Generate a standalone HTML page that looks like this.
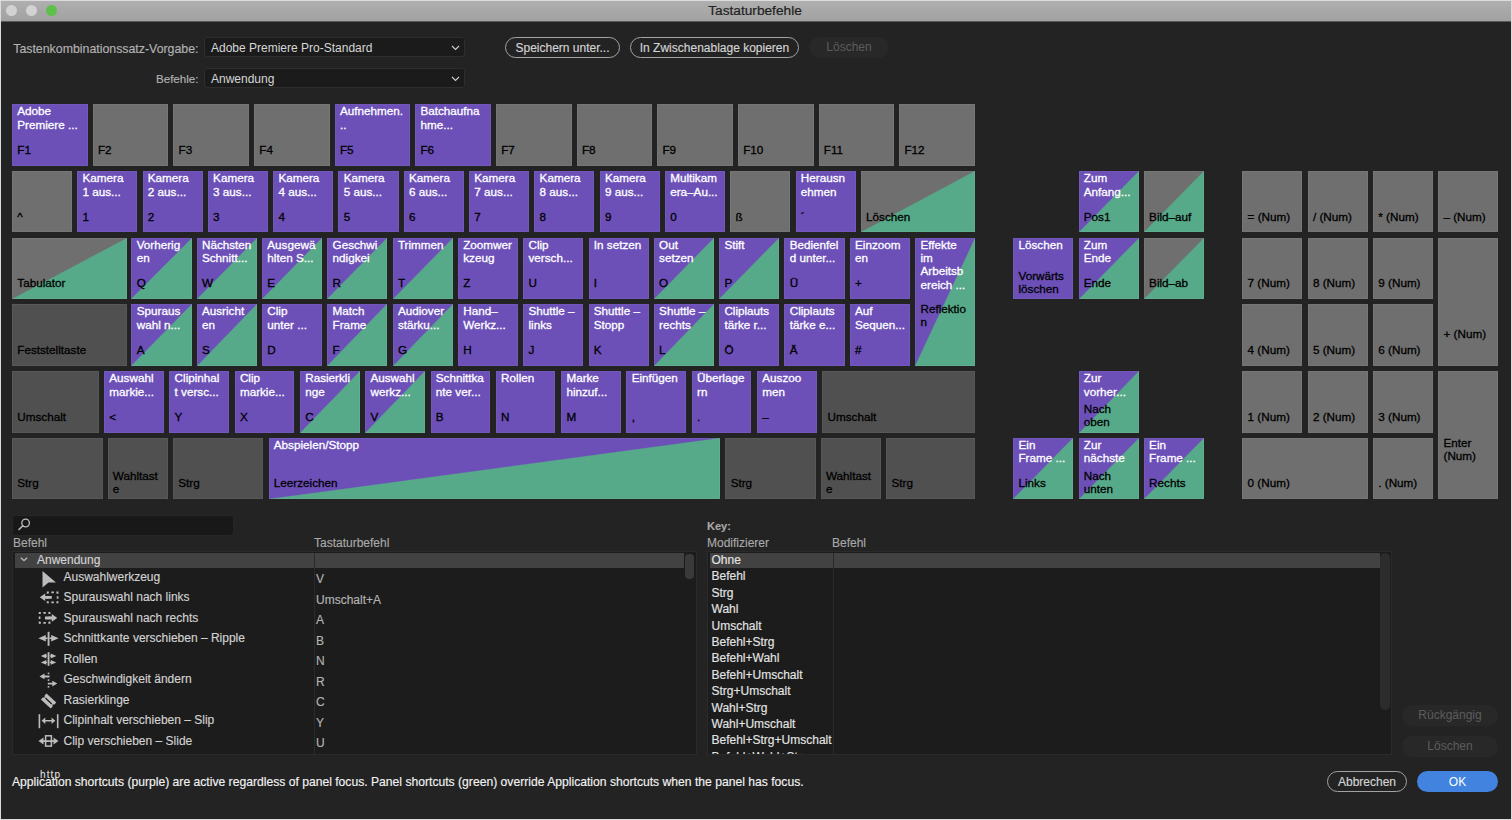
<!DOCTYPE html>
<html><head><meta charset="utf-8">
<style>
html,body{margin:0;padding:0;}
body{width:1512px;height:820px;overflow:hidden;background:#dcdcdc;position:relative;font-family:"Liberation Sans",sans-serif;}
.win{position:absolute;left:1px;top:1px;width:1510px;height:818px;background:#232323;overflow:hidden;}
.tb{position:absolute;left:0;top:0;width:1510px;height:20px;background:linear-gradient(#afafaf,#a1a1a1);border-bottom:1px solid #5a5a5a;}
.tl{position:absolute;top:3.6px;width:11.4px;height:11.4px;border-radius:50%;background:#d2d2d2;}
.title{position:absolute;left:-1px;width:1510px;top:2.4px;-webkit-text-stroke:0.2px #1c1c1c;text-align:center;font-size:13.7px;color:#232323;line-height:16px;}
.abs{position:absolute;}
.k{position:absolute;overflow:hidden;box-shadow:inset 0 0 0 1px rgba(255,255,255,0.05);}
.k .c{position:absolute;left:5.3px;top:0.4px;-webkit-text-stroke:0.3px #fff;font-size:11.7px;line-height:13.2px;color:#fff;white-space:nowrap;}
.k .l{position:absolute;left:5.3px;-webkit-text-stroke:0.3px #000;font-size:11.7px;line-height:13.3px;color:#000;white-space:nowrap;}
.lbl{position:absolute;font-size:12px;color:#b2b2b2;white-space:nowrap;line-height:14px;-webkit-text-stroke:0.15px currentColor;}
.dd{position:absolute;left:204px;width:261px;height:20px;background:#1b1b1b;border:1px solid #2e2e2e;border-radius:3px;box-sizing:border-box;}
.dd span{position:absolute;left:6px;top:2px;font-size:12px;color:#d6d6d6;line-height:14px;}
.dd svg{position:absolute;right:4px;top:7px;}
.btn{position:absolute;height:21px;box-sizing:border-box;border:1.7px solid #a4a4a4;border-radius:11px;color:#d4d4d4;font-size:12px;text-align:center;line-height:19.5px;padding-top:0.7px;-webkit-text-stroke:0.15px currentColor;}
.btnd{position:absolute;height:21px;box-sizing:border-box;border-radius:11px;background:#282828;color:#5c5c5c;font-size:12px;text-align:center;line-height:21px;}
.list{position:absolute;background:#1c1c1c;border:1px solid #2a2a2a;box-sizing:border-box;overflow:hidden;}
.row{position:absolute;font-size:12px;color:#d2d2d2;white-space:nowrap;line-height:14px;-webkit-text-stroke:0.15px currentColor;}
</style></head><body>
<div class="win">
 <div class="tb"></div>
 <div class="tl" style="left:4.6px;"></div>
 <div class="tl" style="left:24.6px;"></div>
 <div class="tl" style="left:44.6px;background:#5cc14a;"></div>
 <div class="title">Tastaturbefehle</div>
</div>
<div class="abs" style="left:0;top:0;width:1512px;height:820px;">
 <div class="lbl" style="right:1313.5px;top:41.5px;font-size:12.35px;">Tastenkombinationssatz-Vorgabe:</div>
 <div class="dd" style="top:37px;"><span style="top:2.5px">Adobe Premiere Pro-Standard</span><svg width="9" height="6" viewBox="0 0 9 6"><path d="M1 1 L4.5 4.5 L8 1" fill="none" stroke="#cfcfcf" stroke-width="1.1"/></svg></div>
 <div class="lbl" style="right:1313.5px;top:72px;font-size:11.6px;">Befehle:</div>
 <div class="dd" style="top:68px;"><span style="top:2.5px">Anwendung</span><svg width="9" height="6" viewBox="0 0 9 6"><path d="M1 1 L4.5 4.5 L8 1" fill="none" stroke="#cfcfcf" stroke-width="1.1"/></svg></div>
 <div class="btn" style="left:505px;top:37px;width:115px;">Speichern unter...</div>
 <div class="btn" style="left:630px;top:37px;width:169px;">In Zwischenablage kopieren</div>
 <div class="btnd" style="left:809px;top:37px;width:80px;">Löschen</div>

<div class="k" style="left:12.0px;top:104.0px;width:75.8px;height:61.8px;background:#6c50b8"><div class="c">Adobe<br>Premiere ...</div><div class="l" style="top:38.5px">F1</div></div>
<div class="k" style="left:92.7px;top:104.0px;width:75.8px;height:61.8px;background:#6f6f6f"><div class="l" style="top:38.5px">F2</div></div>
<div class="k" style="left:173.3px;top:104.0px;width:75.8px;height:61.8px;background:#6f6f6f"><div class="l" style="top:38.5px">F3</div></div>
<div class="k" style="left:254.0px;top:104.0px;width:75.8px;height:61.8px;background:#6f6f6f"><div class="l" style="top:38.5px">F4</div></div>
<div class="k" style="left:334.6px;top:104.0px;width:75.8px;height:61.8px;background:#6c50b8"><div class="c">Aufnehmen.<br>..</div><div class="l" style="top:38.5px">F5</div></div>
<div class="k" style="left:415.2px;top:104.0px;width:75.8px;height:61.8px;background:#6c50b8"><div class="c">Batchaufna<br>hme...</div><div class="l" style="top:38.5px">F6</div></div>
<div class="k" style="left:495.9px;top:104.0px;width:75.8px;height:61.8px;background:#6f6f6f"><div class="l" style="top:38.5px">F7</div></div>
<div class="k" style="left:576.6px;top:104.0px;width:75.8px;height:61.8px;background:#6f6f6f"><div class="l" style="top:38.5px">F8</div></div>
<div class="k" style="left:657.2px;top:104.0px;width:75.8px;height:61.8px;background:#6f6f6f"><div class="l" style="top:38.5px">F9</div></div>
<div class="k" style="left:737.9px;top:104.0px;width:75.8px;height:61.8px;background:#6f6f6f"><div class="l" style="top:38.5px">F10</div></div>
<div class="k" style="left:818.5px;top:104.0px;width:75.8px;height:61.8px;background:#6f6f6f"><div class="l" style="top:38.5px">F11</div></div>
<div class="k" style="left:899.2px;top:104.0px;width:75.8px;height:61.8px;background:#6f6f6f"><div class="l" style="top:38.5px">F12</div></div>
<div class="k" style="left:12.0px;top:171.0px;width:60.3px;height:61.3px;background:#6f6f6f"><div class="l" style="top:38.5px">^</div></div>
<div class="k" style="left:77.2px;top:171.0px;width:60.2px;height:61.3px;background:#6c50b8"><div class="c">Kamera<br>1 aus...</div><div class="l" style="top:38.5px">1</div></div>
<div class="k" style="left:142.5px;top:171.0px;width:60.2px;height:61.3px;background:#6c50b8"><div class="c">Kamera<br>2 aus...</div><div class="l" style="top:38.5px">2</div></div>
<div class="k" style="left:207.8px;top:171.0px;width:60.2px;height:61.3px;background:#6c50b8"><div class="c">Kamera<br>3 aus...</div><div class="l" style="top:38.5px">3</div></div>
<div class="k" style="left:273.1px;top:171.0px;width:60.2px;height:61.3px;background:#6c50b8"><div class="c">Kamera<br>4 aus...</div><div class="l" style="top:38.5px">4</div></div>
<div class="k" style="left:338.4px;top:171.0px;width:60.2px;height:61.3px;background:#6c50b8"><div class="c">Kamera<br>5 aus...</div><div class="l" style="top:38.5px">5</div></div>
<div class="k" style="left:403.7px;top:171.0px;width:60.2px;height:61.3px;background:#6c50b8"><div class="c">Kamera<br>6 aus...</div><div class="l" style="top:38.5px">6</div></div>
<div class="k" style="left:469.0px;top:171.0px;width:60.2px;height:61.3px;background:#6c50b8"><div class="c">Kamera<br>7 aus...</div><div class="l" style="top:38.5px">7</div></div>
<div class="k" style="left:534.3px;top:171.0px;width:60.2px;height:61.3px;background:#6c50b8"><div class="c">Kamera<br>8 aus...</div><div class="l" style="top:38.5px">8</div></div>
<div class="k" style="left:599.6px;top:171.0px;width:60.2px;height:61.3px;background:#6c50b8"><div class="c">Kamera<br>9 aus...</div><div class="l" style="top:38.5px">9</div></div>
<div class="k" style="left:664.9px;top:171.0px;width:60.2px;height:61.3px;background:#6c50b8"><div class="c">Multikam<br>era–Au...</div><div class="l" style="top:38.5px">0</div></div>
<div class="k" style="left:730.2px;top:171.0px;width:60.2px;height:61.3px;background:#6f6f6f"><div class="l" style="top:38.5px">ß</div></div>
<div class="k" style="left:795.5px;top:171.0px;width:60.2px;height:61.3px;background:#6c50b8"><div class="c">Herausn<br>ehmen</div><div class="l" style="top:38.5px">´</div></div>
<div class="k" style="left:860.8px;top:171.0px;width:114.4px;height:61.3px;background:linear-gradient(to bottom right,#6f6f6f calc(50% - 0.6px),#56aa89 calc(50% + 0.6px))"><div class="l" style="top:38.5px">Löschen</div></div>
<div class="k" style="left:12.0px;top:237.5px;width:115.0px;height:61.3px;background:linear-gradient(to bottom right,#6f6f6f calc(50% - 0.6px),#56aa89 calc(50% + 0.6px))"><div class="l" style="top:38.5px">Tabulator</div></div>
<div class="k" style="left:131.4px;top:237.5px;width:60.2px;height:61.3px;background:linear-gradient(to bottom right,#6c50b8 calc(50% - 0.6px),#56aa89 calc(50% + 0.6px))"><div class="c">Vorherig<br>en</div><div class="l" style="top:38.5px">Q</div></div>
<div class="k" style="left:196.7px;top:237.5px;width:60.2px;height:61.3px;background:linear-gradient(to bottom right,#6c50b8 calc(50% - 0.6px),#56aa89 calc(50% + 0.6px))"><div class="c">Nächsten<br>Schnitt...</div><div class="l" style="top:38.5px">W</div></div>
<div class="k" style="left:262.0px;top:237.5px;width:60.2px;height:61.3px;background:linear-gradient(to bottom right,#6c50b8 calc(50% - 0.6px),#56aa89 calc(50% + 0.6px))"><div class="c">Ausgewä<br>hlten S...</div><div class="l" style="top:38.5px">E</div></div>
<div class="k" style="left:327.3px;top:237.5px;width:60.2px;height:61.3px;background:linear-gradient(to bottom right,#6c50b8 calc(50% - 0.6px),#56aa89 calc(50% + 0.6px))"><div class="c">Geschwi<br>ndigkei</div><div class="l" style="top:38.5px">R</div></div>
<div class="k" style="left:392.6px;top:237.5px;width:60.2px;height:61.3px;background:linear-gradient(to bottom right,#6c50b8 calc(50% - 0.6px),#56aa89 calc(50% + 0.6px))"><div class="c">Trimmen</div><div class="l" style="top:38.5px">T</div></div>
<div class="k" style="left:457.9px;top:237.5px;width:60.2px;height:61.3px;background:#6c50b8"><div class="c">Zoomwer<br>kzeug</div><div class="l" style="top:38.5px">Z</div></div>
<div class="k" style="left:523.2px;top:237.5px;width:60.2px;height:61.3px;background:#6c50b8"><div class="c">Clip<br>versch...</div><div class="l" style="top:38.5px">U</div></div>
<div class="k" style="left:588.5px;top:237.5px;width:60.2px;height:61.3px;background:#6c50b8"><div class="c">In setzen</div><div class="l" style="top:38.5px">I</div></div>
<div class="k" style="left:653.8px;top:237.5px;width:60.2px;height:61.3px;background:linear-gradient(to bottom right,#6c50b8 calc(50% - 0.6px),#56aa89 calc(50% + 0.6px))"><div class="c">Out<br>setzen</div><div class="l" style="top:38.5px">O</div></div>
<div class="k" style="left:719.1px;top:237.5px;width:60.2px;height:61.3px;background:linear-gradient(to bottom right,#6c50b8 calc(50% - 0.6px),#56aa89 calc(50% + 0.6px))"><div class="c">Stift</div><div class="l" style="top:38.5px">P</div></div>
<div class="k" style="left:784.4px;top:237.5px;width:60.2px;height:61.3px;background:#6c50b8"><div class="c">Bedienfel<br>d unter...</div><div class="l" style="top:38.5px">Ü</div></div>
<div class="k" style="left:849.7px;top:237.5px;width:60.2px;height:61.3px;background:#6c50b8"><div class="c">Einzoom<br>en</div><div class="l" style="top:38.5px">+</div></div>
<div class="k" style="left:915.2px;top:237.5px;width:60.0px;height:128.3px;background:linear-gradient(to bottom right,#6c50b8 calc(50% - 0.6px),#56aa89 calc(50% + 0.6px))"><div class="c">Effekte<br>im<br>Arbeitsb<br>ereich ...</div><div class="l" style="top:64.7px">Reflektio<br>n</div></div>
<div class="k" style="left:12.0px;top:304.0px;width:115.0px;height:61.8px;background:#505050"><div class="l" style="top:38.5px">Feststelltaste</div></div>
<div class="k" style="left:131.4px;top:304.0px;width:60.2px;height:61.8px;background:linear-gradient(to bottom right,#6c50b8 calc(50% - 0.6px),#56aa89 calc(50% + 0.6px))"><div class="c">Spuraus<br>wahl n...</div><div class="l" style="top:38.5px">A</div></div>
<div class="k" style="left:196.7px;top:304.0px;width:60.2px;height:61.8px;background:linear-gradient(to bottom right,#6c50b8 calc(50% - 0.6px),#56aa89 calc(50% + 0.6px))"><div class="c">Ausricht<br>en</div><div class="l" style="top:38.5px">S</div></div>
<div class="k" style="left:262.0px;top:304.0px;width:60.2px;height:61.8px;background:#6c50b8"><div class="c">Clip<br>unter ...</div><div class="l" style="top:38.5px">D</div></div>
<div class="k" style="left:327.3px;top:304.0px;width:60.2px;height:61.8px;background:linear-gradient(to bottom right,#6c50b8 calc(50% - 0.6px),#56aa89 calc(50% + 0.6px))"><div class="c">Match<br>Frame</div><div class="l" style="top:38.5px">F</div></div>
<div class="k" style="left:392.6px;top:304.0px;width:60.2px;height:61.8px;background:linear-gradient(to bottom right,#6c50b8 calc(50% - 0.6px),#56aa89 calc(50% + 0.6px))"><div class="c">Audiover<br>stärku...</div><div class="l" style="top:38.5px">G</div></div>
<div class="k" style="left:457.9px;top:304.0px;width:60.2px;height:61.8px;background:#6c50b8"><div class="c">Hand–<br>Werkz...</div><div class="l" style="top:38.5px">H</div></div>
<div class="k" style="left:523.2px;top:304.0px;width:60.2px;height:61.8px;background:#6c50b8"><div class="c">Shuttle –<br>links</div><div class="l" style="top:38.5px">J</div></div>
<div class="k" style="left:588.5px;top:304.0px;width:60.2px;height:61.8px;background:#6c50b8"><div class="c">Shuttle –<br>Stopp</div><div class="l" style="top:38.5px">K</div></div>
<div class="k" style="left:653.8px;top:304.0px;width:60.2px;height:61.8px;background:linear-gradient(to bottom right,#6c50b8 calc(50% - 0.6px),#56aa89 calc(50% + 0.6px))"><div class="c">Shuttle –<br>rechts</div><div class="l" style="top:38.5px">L</div></div>
<div class="k" style="left:719.1px;top:304.0px;width:60.2px;height:61.8px;background:#6c50b8"><div class="c">Cliplauts<br>tärke r...</div><div class="l" style="top:38.5px">Ö</div></div>
<div class="k" style="left:784.4px;top:304.0px;width:60.2px;height:61.8px;background:#6c50b8"><div class="c">Cliplauts<br>tärke e...</div><div class="l" style="top:38.5px">Ä</div></div>
<div class="k" style="left:849.7px;top:304.0px;width:60.2px;height:61.8px;background:#6c50b8"><div class="c">Auf<br>Sequen...</div><div class="l" style="top:38.5px">#</div></div>
<div class="k" style="left:12.0px;top:371.0px;width:86.5px;height:61.9px;background:#505050"><div class="l" style="top:38.5px">Umschalt</div></div>
<div class="k" style="left:104.0px;top:371.0px;width:59.7px;height:61.9px;background:#6c50b8"><div class="c">Auswahl<br>markie...</div><div class="l" style="top:38.5px">&lt;</div></div>
<div class="k" style="left:169.3px;top:371.0px;width:59.7px;height:61.9px;background:#6c50b8"><div class="c">Clipinhal<br>t versc...</div><div class="l" style="top:38.5px">Y</div></div>
<div class="k" style="left:234.6px;top:371.0px;width:59.7px;height:61.9px;background:#6c50b8"><div class="c">Clip<br>markie...</div><div class="l" style="top:38.5px">X</div></div>
<div class="k" style="left:299.9px;top:371.0px;width:59.7px;height:61.9px;background:linear-gradient(to bottom right,#6c50b8 calc(50% - 0.6px),#56aa89 calc(50% + 0.6px))"><div class="c">Rasierkli<br>nge</div><div class="l" style="top:38.5px">C</div></div>
<div class="k" style="left:365.2px;top:371.0px;width:59.7px;height:61.9px;background:linear-gradient(to bottom right,#6c50b8 calc(50% - 0.6px),#56aa89 calc(50% + 0.6px))"><div class="c">Auswahl<br>werkz...</div><div class="l" style="top:38.5px">V</div></div>
<div class="k" style="left:430.5px;top:371.0px;width:59.7px;height:61.9px;background:#6c50b8"><div class="c">Schnittka<br>nte ver...</div><div class="l" style="top:38.5px">B</div></div>
<div class="k" style="left:495.8px;top:371.0px;width:59.7px;height:61.9px;background:#6c50b8"><div class="c">Rollen</div><div class="l" style="top:38.5px">N</div></div>
<div class="k" style="left:561.1px;top:371.0px;width:59.7px;height:61.9px;background:#6c50b8"><div class="c">Marke<br>hinzuf...</div><div class="l" style="top:38.5px">M</div></div>
<div class="k" style="left:626.4px;top:371.0px;width:59.7px;height:61.9px;background:#6c50b8"><div class="c">Einfügen</div><div class="l" style="top:38.5px">,</div></div>
<div class="k" style="left:691.7px;top:371.0px;width:59.7px;height:61.9px;background:#6c50b8"><div class="c">Überlage<br>rn</div><div class="l" style="top:38.5px">.</div></div>
<div class="k" style="left:757.0px;top:371.0px;width:59.7px;height:61.9px;background:#6c50b8"><div class="c">Auszoo<br>men</div><div class="l" style="top:38.5px">–</div></div>
<div class="k" style="left:822.3px;top:371.0px;width:152.9px;height:61.9px;background:#505050"><div class="l" style="top:38.5px">Umschalt</div></div>
<div class="k" style="left:12.0px;top:437.7px;width:90.5px;height:61.3px;background:#505050"><div class="l" style="top:38.5px">Strg</div></div>
<div class="k" style="left:107.5px;top:437.7px;width:60.2px;height:61.3px;background:#505050"><div class="l" style="top:31.0px">Wahltast<br>e</div></div>
<div class="k" style="left:173.0px;top:437.7px;width:90.0px;height:61.3px;background:#505050"><div class="l" style="top:38.5px">Strg</div></div>
<div class="k" style="left:268.5px;top:437.7px;width:451.3px;height:61.3px;background:linear-gradient(to bottom right,#6c50b8 calc(50% - 0.6px),#56aa89 calc(50% + 0.6px))"><div class="c">Abspielen/Stopp</div><div class="l" style="top:38.5px">Leerzeichen</div></div>
<div class="k" style="left:725.4px;top:437.7px;width:90.3px;height:61.3px;background:#505050"><div class="l" style="top:38.5px">Strg</div></div>
<div class="k" style="left:820.7px;top:437.7px;width:60.2px;height:61.3px;background:#505050"><div class="l" style="top:31.0px">Wahltast<br>e</div></div>
<div class="k" style="left:886.2px;top:437.7px;width:89.3px;height:61.3px;background:#505050"><div class="l" style="top:38.5px">Strg</div></div>
<div class="k" style="left:1078.5px;top:171.0px;width:60.2px;height:61.3px;background:linear-gradient(to bottom right,#6c50b8 calc(50% - 0.6px),#56aa89 calc(50% + 0.6px))"><div class="c">Zum<br>Anfang...</div><div class="l" style="top:38.5px">Pos1</div></div>
<div class="k" style="left:1143.8px;top:171.0px;width:60.2px;height:61.3px;background:linear-gradient(to bottom right,#6f6f6f calc(50% - 0.6px),#56aa89 calc(50% + 0.6px))"><div class="l" style="top:38.5px">Bild–auf</div></div>
<div class="k" style="left:1013.2px;top:237.5px;width:60.2px;height:61.3px;background:#6c50b8"><div class="c">Löschen</div><div class="l" style="top:31.0px">Vorwärts<br>löschen</div></div>
<div class="k" style="left:1078.5px;top:237.5px;width:60.2px;height:61.3px;background:linear-gradient(to bottom right,#6c50b8 calc(50% - 0.6px),#56aa89 calc(50% + 0.6px))"><div class="c">Zum<br>Ende</div><div class="l" style="top:38.5px">Ende</div></div>
<div class="k" style="left:1143.8px;top:237.5px;width:60.2px;height:61.3px;background:linear-gradient(to bottom right,#6f6f6f calc(50% - 0.6px),#56aa89 calc(50% + 0.6px))"><div class="l" style="top:38.5px">Bild–ab</div></div>
<div class="k" style="left:1078.5px;top:371.0px;width:60.2px;height:61.9px;background:linear-gradient(to bottom right,#6c50b8 calc(50% - 0.6px),#56aa89 calc(50% + 0.6px))"><div class="c">Zur<br>vorher...</div><div class="l" style="top:31.0px">Nach<br>oben</div></div>
<div class="k" style="left:1013.2px;top:437.7px;width:60.2px;height:61.3px;background:linear-gradient(to bottom right,#6c50b8 calc(50% - 0.6px),#56aa89 calc(50% + 0.6px))"><div class="c">Ein<br>Frame ...</div><div class="l" style="top:38.5px">Links</div></div>
<div class="k" style="left:1078.5px;top:437.7px;width:60.2px;height:61.3px;background:linear-gradient(to bottom right,#6c50b8 calc(50% - 0.6px),#56aa89 calc(50% + 0.6px))"><div class="c">Zur<br>nächste</div><div class="l" style="top:31.0px">Nach<br>unten</div></div>
<div class="k" style="left:1143.8px;top:437.7px;width:60.2px;height:61.3px;background:linear-gradient(to bottom right,#6c50b8 calc(50% - 0.6px),#56aa89 calc(50% + 0.6px))"><div class="c">Ein<br>Frame ...</div><div class="l" style="top:38.5px">Rechts</div></div>
<div class="k" style="left:1242.3px;top:171.0px;width:60.2px;height:61.3px;background:#6f6f6f"><div class="l" style="top:38.5px">= (Num)</div></div>
<div class="k" style="left:1307.6px;top:171.0px;width:60.2px;height:61.3px;background:#6f6f6f"><div class="l" style="top:38.5px">/ (Num)</div></div>
<div class="k" style="left:1373.0px;top:171.0px;width:60.2px;height:61.3px;background:#6f6f6f"><div class="l" style="top:38.5px">* (Num)</div></div>
<div class="k" style="left:1438.2px;top:171.0px;width:60.2px;height:61.3px;background:#6f6f6f"><div class="l" style="top:38.5px">– (Num)</div></div>
<div class="k" style="left:1242.3px;top:237.5px;width:60.2px;height:61.3px;background:#6f6f6f"><div class="l" style="top:38.5px">7 (Num)</div></div>
<div class="k" style="left:1307.6px;top:237.5px;width:60.2px;height:61.3px;background:#6f6f6f"><div class="l" style="top:38.5px">8 (Num)</div></div>
<div class="k" style="left:1373.0px;top:237.5px;width:60.2px;height:61.3px;background:#6f6f6f"><div class="l" style="top:38.5px">9 (Num)</div></div>
<div class="k" style="left:1438.2px;top:237.5px;width:60.2px;height:128.3px;background:#6f6f6f"><div class="l" style="top:89.0px">+ (Num)</div></div>
<div class="k" style="left:1242.3px;top:304.0px;width:60.2px;height:61.8px;background:#6f6f6f"><div class="l" style="top:38.5px">4 (Num)</div></div>
<div class="k" style="left:1307.6px;top:304.0px;width:60.2px;height:61.8px;background:#6f6f6f"><div class="l" style="top:38.5px">5 (Num)</div></div>
<div class="k" style="left:1373.0px;top:304.0px;width:60.2px;height:61.8px;background:#6f6f6f"><div class="l" style="top:38.5px">6 (Num)</div></div>
<div class="k" style="left:1242.3px;top:371.0px;width:60.2px;height:61.9px;background:#6f6f6f"><div class="l" style="top:38.5px">1 (Num)</div></div>
<div class="k" style="left:1307.6px;top:371.0px;width:60.2px;height:61.9px;background:#6f6f6f"><div class="l" style="top:38.5px">2 (Num)</div></div>
<div class="k" style="left:1373.0px;top:371.0px;width:60.2px;height:61.9px;background:#6f6f6f"><div class="l" style="top:38.5px">3 (Num)</div></div>
<div class="k" style="left:1438.2px;top:371.0px;width:60.2px;height:128.0px;background:#6f6f6f"><div class="l" style="top:65.2px">Enter<br>(Num)</div></div>
<div class="k" style="left:1242.3px;top:437.7px;width:125.5px;height:61.3px;background:#6f6f6f"><div class="l" style="top:38.5px">0 (Num)</div></div>
<div class="k" style="left:1373.0px;top:437.7px;width:60.2px;height:61.3px;background:#6f6f6f"><div class="l" style="top:38.5px">. (Num)</div></div>


 <!-- search -->
 <div class="abs" style="left:13px;top:515.5px;width:220px;height:19px;background:#181818;border-radius:3px;box-shadow:0 0 0 1px #262626;"></div>
 <svg class="abs" style="left:17px;top:517px;" width="14" height="14" viewBox="0 0 14 14"><circle cx="8.6" cy="6" r="3.8" fill="none" stroke="#bdbdbd" stroke-width="1.3"/><path d="M5.8 8.8 L2 12.5" stroke="#bdbdbd" stroke-width="1.6" stroke-linecap="round"/></svg>
 <div class="lbl" style="left:13px;top:535.7px;color:#a8a8a8;">Befehl</div>
 <div class="lbl" style="left:314px;top:535.7px;color:#a8a8a8;">Tastaturbefehl</div>

 <div class="list" style="left:12px;top:551px;width:685px;height:204px;">
  <div class="abs" style="left:1.5px;top:1px;width:669px;height:15px;background:#424242;"></div>
  <div class="abs" style="left:300.5px;top:1px;width:1px;height:202px;background:#2a2a2a;"></div>
  <div class="abs" style="left:672px;top:1.5px;width:9px;height:25px;background:#3a3a3a;border-radius:4px;"></div>
 </div>
 <svg class="abs" style="left:19px;top:556px;" width="10" height="7" viewBox="0 0 10 7"><path d="M1.8 1.8 L5 4.6 L8.2 1.8" fill="none" stroke="#b4b4b4" stroke-width="1.4"/></svg>
 <div class="row" style="left:37px;top:553px;">Anwendung</div>
 <div class="row" style="left:63.5px;top:569.5px;">Auswahlwerkzeug</div>
 <div class="row" style="left:63.5px;top:590px;">Spurauswahl nach links</div>
 <div class="row" style="left:63.5px;top:610.5px;">Spurauswahl nach rechts</div>
 <div class="row" style="left:63.5px;top:631px;">Schnittkante verschieben – Ripple</div>
 <div class="row" style="left:63.5px;top:651.5px;">Rollen</div>
 <div class="row" style="left:63.5px;top:672px;">Geschwindigkeit ändern</div>
 <div class="row" style="left:63.5px;top:692.5px;">Rasierklinge</div>
 <div class="row" style="left:63.5px;top:713px;">Clipinhalt verschieben – Slip</div>
 <div class="row" style="left:63.5px;top:733.5px;">Clip verschieben – Slide</div>
 <div class="row" style="left:316px;top:572px;color:#b4b4b4;">V</div>
 <div class="row" style="left:316px;top:592.5px;color:#b4b4b4;">Umschalt+A</div>
 <div class="row" style="left:316px;top:613px;color:#b4b4b4;">A</div>
 <div class="row" style="left:316px;top:633.5px;color:#b4b4b4;">B</div>
 <div class="row" style="left:316px;top:654px;color:#b4b4b4;">N</div>
 <div class="row" style="left:316px;top:674.5px;color:#b4b4b4;">R</div>
 <div class="row" style="left:316px;top:695px;color:#b4b4b4;">C</div>
 <div class="row" style="left:316px;top:715.5px;color:#b4b4b4;">Y</div>
 <div class="row" style="left:316px;top:736px;color:#b4b4b4;">U</div>

 <!-- icons -->
 <svg class="abs" style="left:30px;top:565px;" width="35" height="190" viewBox="0 0 35 190">
  <g transform="translate(-30,-565)" fill="#bcbcbc" stroke="none">
   <path d="M42.5 571 L56 582.5 L48.5 582.5 L42.5 587.5 Z"/>
   <path d="M39.8 597.3 L45.2 593.5 L45.2 595.9 L51.8 595.9 L51.8 598.8 L45.2 598.8 L45.2 601.1 Z"/>
   <g fill="none" stroke="#bcbcbc" stroke-width="1.7" stroke-dasharray="2.5 2.5" stroke-dashoffset="1.25"><rect x="47.6" y="592.4" width="10" height="10"/></g>
   <path d="M57.2 617.9 L51.8 614.1 L51.8 616.5 L45 616.5 L45 619.4 L51.8 619.4 L51.8 621.7 Z"/>
   <g fill="none" stroke="#bcbcbc" stroke-width="1.7" stroke-dasharray="2.5 2.5" stroke-dashoffset="1.25"><rect x="39.6" y="612.8" width="10" height="10"/></g>
   <rect x="47.6" y="631.8" width="1.9" height="14"/>
   <path d="M38.4 638.3 L45.8 635 L45.8 637.5 L47.6 637.5 L47.6 639.1 L45.8 639.1 L45.8 641.6 Z"/>
   <path d="M58.6 638.3 L51.2 635 L51.2 637.5 L49.5 637.5 L49.5 639.1 L51.2 639.1 L51.2 641.6 Z"/>
   <rect x="47.6" y="652.2" width="1.9" height="13.6"/>
   <path d="M40.8 656 L46.3 653.6 L46.3 658.4 Z M56.3 656 L50.8 653.6 L50.8 658.4 Z M40.8 662.4 L46.3 660 L46.3 664.8 Z M56.3 662.4 L50.8 660 L50.8 664.8 Z"/>
   <rect x="45.6" y="655.3" width="1.5" height="1.4"/><rect x="50" y="655.3" width="1.5" height="1.4"/>
   <rect x="45.6" y="661.7" width="1.5" height="1.4"/><rect x="50" y="661.7" width="1.5" height="1.4"/>
   <path d="M39.5 676.4 L44.5 673.6 L44.5 675.6 L49.5 675.6 L49.5 677.4 L44.5 677.4 L44.5 679.2 Z"/>
   <path d="M57.3 683.6 L52.3 680.8 L52.3 682.8 L47.8 682.8 L47.8 684.5 L52.3 684.5 L52.3 686.4 Z"/>
   <rect x="47.7" y="672.6" width="1.6" height="1.6"/><rect x="47.7" y="679.3" width="1.6" height="1.6"/><rect x="47.7" y="686" width="1.6" height="1.6"/>
   <g transform="translate(48.6,701) rotate(43)"><path d="M-6.7 -4.1 L6.7 -4.1 L6.7 -1.3 L5.3 0 L6.7 1.3 L6.7 4.1 L-6.7 4.1 L-6.7 1.3 L-5.3 0 L-6.7 -1.3 Z M-4.3 -0.65 L4.3 -0.65 L4.3 0.65 L-4.3 0.65 Z" fill-rule="evenodd"/></g>
   <rect x="38.6" y="714.2" width="1.6" height="14"/><rect x="56.9" y="714.2" width="1.6" height="14"/>
   <path d="M41.6 720.8 L45.3 717.6 L45.3 720 L51.6 720 L51.6 717.6 L55.3 720.8 L51.6 724 L51.6 721.6 L45.3 721.6 L45.3 724 Z"/>
   <path d="M38.5 741.1 L43.5 737.6 L43.5 740.2 L53.5 740.2 L53.5 737.6 L58.5 741.1 L53.5 744.6 L53.5 742 L43.5 742 L43.5 744.6 Z"/>
   <g fill="none" stroke="#bcbcbc" stroke-width="1.5"><rect x="45.6" y="735.8" width="5.8" height="10.3"/></g>
  </g>
 </svg>

 <div class="lbl" style="left:707px;top:518.5px;color:#a8a8a8;font-weight:bold;font-size:11px;">Key:</div>
 <div class="lbl" style="left:707px;top:535.7px;color:#a8a8a8;">Modifizierer</div>
 <div class="lbl" style="left:832px;top:535.7px;color:#a8a8a8;">Befehl</div>
 <div class="list" style="left:707px;top:551px;width:685px;height:204px;">
  <div class="abs" style="left:1.5px;top:1px;width:670px;height:15px;background:#424242;"></div>
  <div class="abs" style="left:125px;top:1px;width:1px;height:202px;background:#2a2a2a;"></div>
  <div class="abs" style="left:672px;top:1px;width:10px;height:157px;background:#2c2c2c;border-radius:5px;"></div>
 </div>
 <div class="row" style="left:711.5px;top:553.0px;color:#e4e4e4;">Ohne</div>
 <div class="row" style="left:711.5px;top:569.4px;color:#e4e4e4;">Befehl</div>
 <div class="row" style="left:711.5px;top:585.8px;color:#e4e4e4;">Strg</div>
 <div class="row" style="left:711.5px;top:602.2px;color:#e4e4e4;">Wahl</div>
 <div class="row" style="left:711.5px;top:618.6px;color:#e4e4e4;">Umschalt</div>
 <div class="row" style="left:711.5px;top:635.0px;color:#e4e4e4;">Befehl+Strg</div>
 <div class="row" style="left:711.5px;top:651.4px;color:#e4e4e4;">Befehl+Wahl</div>
 <div class="row" style="left:711.5px;top:667.8px;color:#e4e4e4;">Befehl+Umschalt</div>
 <div class="row" style="left:711.5px;top:684.2px;color:#e4e4e4;">Strg+Umschalt</div>
 <div class="row" style="left:711.5px;top:700.6px;color:#e4e4e4;">Wahl+Strg</div>
 <div class="row" style="left:711.5px;top:717.0px;color:#e4e4e4;">Wahl+Umschalt</div>
 <div class="row" style="left:711.5px;top:733.4px;color:#e4e4e4;">Befehl+Strg+Umschalt</div>
 <div class="abs" style="left:708px;top:748px;width:124px;height:6px;overflow:hidden;"><div class="row" style="left:3.5px;top:2px;color:#e4e4e4;">Befehl+Wahl+Strg</div></div>

 <div class="btnd" style="left:1402px;top:704.5px;width:96px;">Rückgängig</div>
 <div class="btnd" style="left:1402px;top:735.5px;width:96px;">Löschen</div>

 <div class="row" style="left:12px;top:775px;color:#f2f2f2;font-size:12.15px;">Application shortcuts (purple) are active regardless of panel focus. Panel shortcuts (green) override Application shortcuts when the panel has focus.</div>
 <div class="btn" style="left:1327px;top:771px;width:80px;border:1.7px solid #a2a2a2;line-height:19px;">Abbrechen</div>
 <div class="abs" style="left:40px;top:769.5px;font-size:10px;color:#e8e8e8;line-height:10px;letter-spacing:1.1px;">http</div>
 <div class="btnd" style="left:1417px;top:771px;width:81px;background:#4283df;color:#fff;line-height:22px;">OK</div>
</div>
</body></html>
